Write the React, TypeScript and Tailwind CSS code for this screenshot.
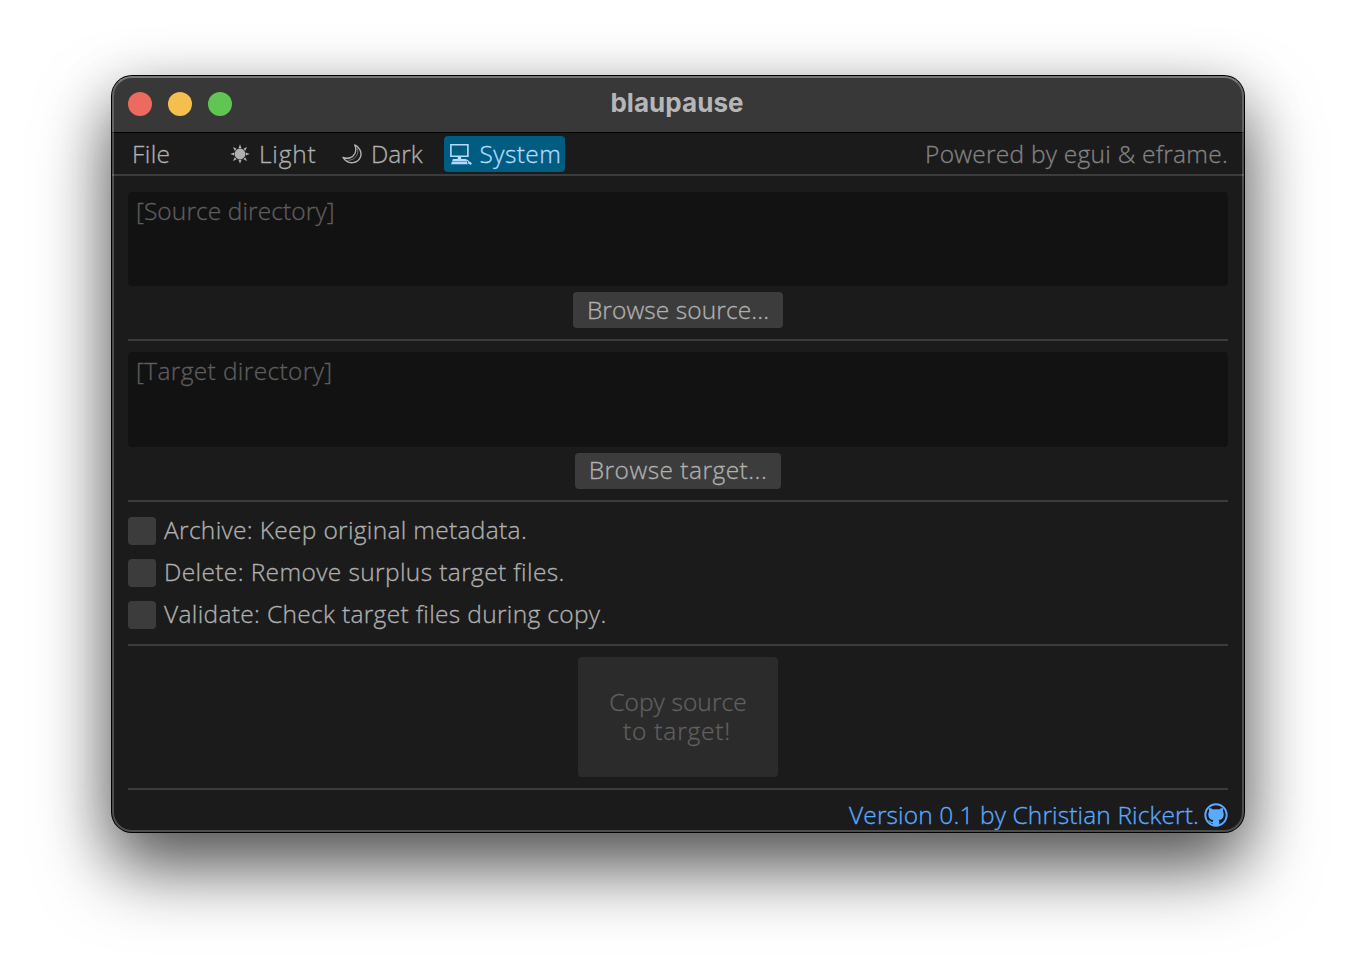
import type { ReactNode } from "react";

const uiFont =
  "font-['Open_Sans','Noto_Sans',sans-serif] font-light text-[24.5px] leading-[30px] whitespace-nowrap [-webkit-text-stroke:0.3px_currentColor]";

function SunIcon() {
  return (
    <svg width="20" height="20" viewBox="0 0 20 20" fill="currentColor">
      <circle cx="10" cy="10" r="5.4" />
      <path d="M10 0.300l1.500 3.900H8.500zM10 19.700l1.500-3.900H8.500zM0.300 10l3.900-1.500v3zM19.700 10l-3.900-1.500v3zM3 3l3.700 1.700-2 2zM17 3l-1.700 3.700-2-2zM3 17l1.700-3.700 2 2zM17 17l-3.700-1.700 2-2z" />
    </svg>
  );
}

function MoonIcon() {
  return (
    <svg width="20" height="20" viewBox="0 0 20 20" fill="none" stroke="currentColor" strokeWidth="1.4" strokeLinejoin="round">
      <path d="M12.8 1C17.5 3 20 8 18.6 12.5C16.5 19.5 6 21.500 1 13.400C6 15.500 11 13.500 12.900 9.500C14.200 6.500 14 3.500 12.800 1Z" />
      <path d="M15.200 4C16.400 7 15.800 10.200 14 12.600C12 15.200 8.500 16.700 5.300 16.200" strokeWidth="0.6" />
    </svg>
  );
}

function ComputerIcon() {
  return (
    <svg width="24" height="24" viewBox="0 0 24 24" fill="none" stroke="currentColor">
      <path d="M2.900 2.700h17v11.600h-17z" strokeWidth="1.600" />
      <path d="M11.400 14.500v3" strokeWidth="3.500" />
      <path d="M4.900 17h13l1.800 5.200H3.100z" fill="currentColor" stroke="none" />
      <path d="M4 19.600h14" stroke="#005c80" strokeWidth="0.500" />
      <path d="M17.800 18.300c2-.8 2.300.8 3.200 2" strokeWidth="1.200" />
      <ellipse cx="21.900" cy="21.200" rx="1.900" ry="1.200" transform="rotate(25 21.900 21.200)" fill="currentColor" stroke="none" />
    </svg>
  );
}

function GithubIcon() {
  return (
    <svg width="24" height="24" viewBox="0 0 24 24">
      <circle cx="12" cy="12" r="10.700" fill="none" stroke="currentColor" strokeWidth="1.900" />
      <path
        fill="currentColor"
        d="M5.200 5C6.900 5 8.200 5.800 9 6.500C11 6.200 13 6.200 15 6.500C15.800 5.800 17.100 5 18.800 5C19.200 6.200 19.200 7.400 18.800 8.300C19.600 9.400 19.900 11 19.600 12.700C19.200 15.400 17.500 16.700 14.700 17.100C15.200 17.700 15.300 18.300 15.300 19V22.500H8.700V20.200C7 20.500 6 19.700 5.400 18.600C5 18 4.700 17.700 4.300 17.400C5.500 17.100 6.300 17.900 6.900 18.500C7.500 19 8.100 19 8.800 18.700C8.800 18 8.900 17.600 9.300 17.100C6.500 16.700 4.800 15.400 4.400 12.700C4.100 11 4.400 9.400 5.200 8.300C4.800 7.400 4.800 6.200 5.200 5Z"
      />
    </svg>
  );
}

function Separator() {
  return <div className="h-[2px] w-full shrink-0 bg-[#3c3c3c]" />;
}

function PathField({ className, children }: { className: string; children: ReactNode }) {
  return (
    <div className={`w-full shrink-0 rounded-[4px] bg-[#121212] pt-[4px] pl-[8px] text-[#5e5e5e] ${className}`}>{children}</div>
  );
}

function Option({ children }: { children: ReactNode }) {
  return (
    <label className="flex h-[28px] items-center gap-[8px] text-[#b0b0b0]">
      <span className="size-[28px] rounded-[4px] bg-[#3c3c3c]" />
      {children}
    </label>
  );
}

export default function App() {
  return (
    <div className="h-[980px] w-full overflow-hidden bg-white pt-[76px] pl-[112px]">
      <div className="relative h-[756px] w-[1132px] rounded-[20px] bg-[#1b1b1b] shadow-[0_0_0_1px_#000,0_36px_72px_rgba(0,0,0,0.6),0_16px_60px_rgba(0,0,0,0.22)]">
        <div className={`flex h-full w-full flex-col overflow-hidden rounded-[20px] ${uiFont}`}>
          <header className="grid h-[57px] shrink-0 grid-cols-3 items-center border-b border-black bg-[#383838] px-[16px]">
            <div className="flex gap-[16px]">
              <span className="size-[24px] rounded-full bg-[#ed6a5e]" />
              <span className="size-[24px] rounded-full bg-[#f5bf4f]" />
              <span className="size-[24px] rounded-full bg-[#61c554]" />
            </div>
            <h1 className="-mt-[3px] -ml-[2px] text-center font-['Inter','Liberation_Sans',sans-serif] text-[26px] font-bold text-[#b6b6b6] [-webkit-text-stroke:0]">
              <span className="tracking-[0.05px]">blaupause</span>
            </h1>
          </header>

          <nav className="flex h-[41px] shrink-0 items-center pr-[16px] pl-[20px] text-[#b0b0b0]">
            <span className="w-[98px] tracking-[0.4px]">File</span>
            <span className="flex w-[112px] items-center gap-[9px]">
              <SunIcon />
              <span className="tracking-[0.8px]">Light</span>
            </span>
            <span className="flex w-[102px] items-center gap-[9px]">
              <MoonIcon />
              <span>Dark</span>
            </span>
            <span className="flex h-[36px] w-[121px] items-center gap-[7.500px] rounded-[4px] bg-[#005c80] pl-[4px] text-[#b5dcff]">
              <ComputerIcon />
              <span className="tracking-[0.4px]">System</span>
            </span>
            <span className="ml-auto text-[#838383]">
              <span className="tracking-[0.25px]">Powered by egui &amp; eframe.</span>
            </span>
          </nav>
          <Separator />

          <main className="flex flex-1 flex-col items-center px-[16px] pt-[16px]">
            <PathField className="h-[94px]">
              <span className="tracking-[0.1px]">[Source directory]</span>
            </PathField>
            <button className="mt-[6px] h-[36px] w-[210px] shrink-0 rounded-[4px] bg-[#3c3c3c] text-[#b0b0b0]">
              <span className="tracking-[0.1px]">Browse source...</span>
            </button>
            <div className="mt-[11px] w-full">
              <Separator />
            </div>

            <PathField className="mt-[11px] h-[95px]">
              <span className="tracking-[0.37px]">[Target directory]</span>
            </PathField>
            <button className="mt-[6px] h-[36px] w-[206px] shrink-0 rounded-[4px] bg-[#3c3c3c] pb-[2px] text-[#b0b0b0]">
              <span className="tracking-[0.48px]">Browse target...</span>
            </button>
            <div className="mt-[11px] w-full">
              <Separator />
            </div>

            <div className="mt-[15px] flex w-full flex-col gap-[14px]">
              <Option>
                <span className="-mt-[2px] tracking-[0.32px]">Archive: Keep original metadata.</span>
              </Option>
              <Option>
                <span className="-mt-[2px] tracking-[0.38px]">Delete: Remove surplus target files.</span>
              </Option>
              <Option>
                <span className="-mt-[2px] tracking-[0.33px]">Validate: Check target files during copy.</span>
              </Option>
            </div>
            <div className="mt-[15px] w-full">
              <Separator />
            </div>

            <button className="mt-[11px] flex h-[120px] w-[200px] shrink-0 flex-col items-center justify-center rounded-[4px] bg-[#2b2b2b] pb-[2px] leading-[29px] text-[#606060]">
              <span className="tracking-[0.1px]">Copy source</span>
              <span className="mr-[2px] tracking-[0.8px]">to target!</span>
            </button>
            <div className="mt-[11px] w-full">
              <Separator />
            </div>

            <footer className="mt-[10px] flex h-[30px] w-full items-center justify-end gap-[5px] text-[#5aaaff]">
              <span className="tracking-[0.12px]">Version 0.1 by Christian Rickert.</span>
              <GithubIcon />
            </footer>
          </main>
        </div>
        <div className="pointer-events-none absolute inset-0 rounded-[20px] border-2 border-white/22 border-t-white/32" />
      </div>
    </div>
  );
}
